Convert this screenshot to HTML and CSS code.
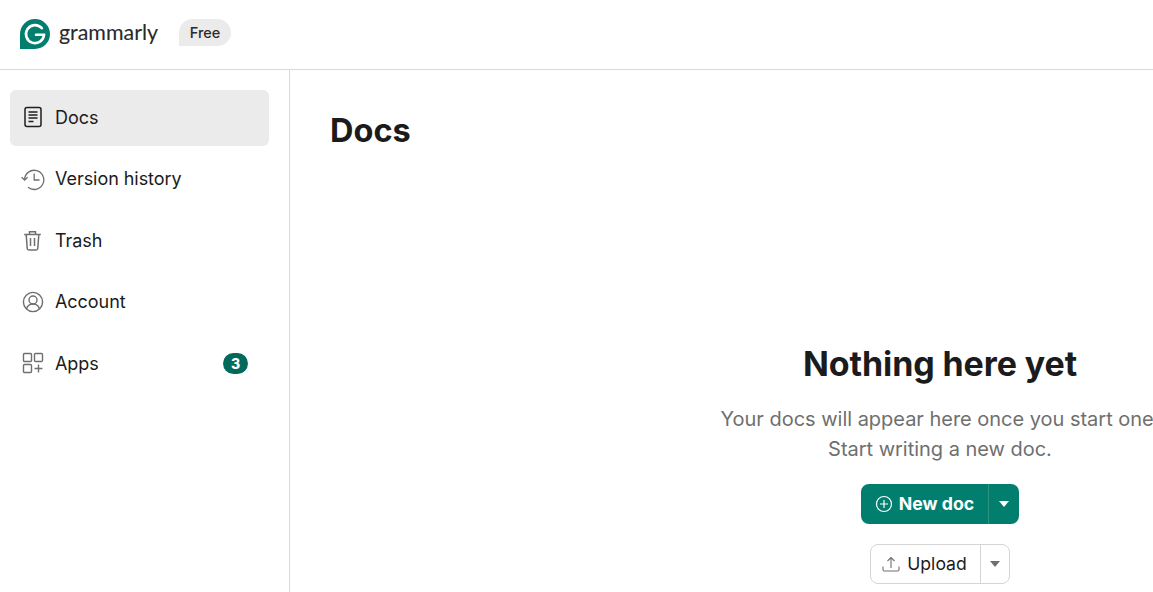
FILE: index.html
```html
<!DOCTYPE html>
<html lang="en">
<head>
<meta charset="utf-8">
<title>Grammarly Docs</title>
<link rel="stylesheet" href="styles.css">
</head>
<body>
<div class="app">
  <header class="topbar">
    <svg class="logo" width="30" height="30" viewBox="0 0 30 30" aria-hidden="true">
      <path d="M15 0a15 15 0 0 1 0 30H0V15A15 15 0 0 1 15 0z" fill="#027e6f"/>
      <path d="M21.800 9.200A9 9 0 1 0 24 15.800H16" fill="none" stroke="#fff" stroke-width="2.600" stroke-linecap="round"/>
    </svg>
    <span class="wordmark">grammarly</span>
    <span class="plan">Free</span>
  </header>
  <div class="body">
    <nav class="sidebar">
      <a class="nav-item active">
        <svg class="nav-icon" viewBox="0 0 24 24" aria-hidden="true"><rect x="4" y="2.500" width="16" height="19" rx="2" fill="none" stroke="#1f1f1f" stroke-width="1.500"/><path d="M7.500 7h9M7.500 10h9M7.500 13h9M7.500 16.500h5" stroke="#1f1f1f" stroke-width="1.500"/></svg>
        <span>Docs</span>
      </a>
      <a class="nav-item">
        <svg class="nav-icon" viewBox="0 0 24 24" aria-hidden="true"><path d="M3.600 12.500A9.600 9.600 0 1 1 7 20.200" fill="none" stroke="#6f6f6f" stroke-width="1.300"/><path d="M.6 10.200l3 2.800 3-2.800M13.200 6.500v6.500H18.500" fill="none" stroke="#6f6f6f" stroke-width="1.300"/></svg>
        <span>Version history</span>
      </a>
      <a class="nav-item">
        <svg class="nav-icon" viewBox="0 0 24 24" aria-hidden="true"><path d="M3.200 6.500h16.600M8.500 6.500V3.700h6v2.800M5.200 6.500l1 14a1.700 1.700 0 0 0 1.700 1.500h7.200a1.700 1.700 0 0 0 1.700-1.500l1-14M9.500 10v8M13.500 10v8" fill="none" stroke="#6f6f6f" stroke-width="1.500"/></svg>
        <span>Trash</span>
      </a>
      <a class="nav-item">
        <svg class="nav-icon" viewBox="0 0 24 24" aria-hidden="true"><circle cx="12" cy="12" r="9.600" fill="none" stroke="#6f6f6f" stroke-width="1.400"/><circle cx="12" cy="10" r="4" fill="none" stroke="#6f6f6f" stroke-width="1.400"/><path d="M5.500 19c1-3.500 3.500-5 6.500-5s5.500 1.500 6.500 5" fill="none" stroke="#6f6f6f" stroke-width="1.400"/></svg>
        <span>Account</span>
      </a>
      <a class="nav-item">
        <svg class="nav-icon" viewBox="0 0 24 24" aria-hidden="true"><g fill="none" stroke="#6f6f6f" stroke-width="1.400"><rect x="2.500" y="2.500" width="8" height="8" rx="1"/><rect x="13.500" y="2.500" width="8" height="8" rx="1"/><rect x="2.500" y="13.500" width="8" height="8" rx="1"/><path d="M17.500 13.500v8M13.500 17.500h8"/></g></svg>
        <span>Apps</span>
        <span class="count">3</span>
      </a>
    </nav>
    <main class="main">
      <h1 class="title">Docs</h1>
      <section class="empty">
        <h2 class="empty-title">Nothing here yet</h2>
        <p class="empty-text">Your docs will appear here once you start one.<br>Start writing a new doc.</p>
        <div class="split primary">
          <button class="split-main" type="button">
            <svg width="18" height="18" viewBox="0 0 18 18" aria-hidden="true"><circle cx="9" cy="9" r="7.500" fill="none" stroke="#fff" stroke-width="1.200"/><path d="M9 5v8M5 9h8" stroke="#fff" stroke-width="1.200"/></svg>
            <span>New doc</span>
          </button>
          <button class="split-caret" type="button" aria-label="More"><i class="caret"></i></button>
        </div>
        <div class="split secondary">
          <button class="split-main" type="button">
            <svg width="18" height="18" viewBox="0 0 18 18" aria-hidden="true"><path d="M9 13V2.500M5.500 6L9 2.500 12.500 6M1 11.500V14.500a1.500 1.500 0 0 0 1.500 1.500h13a1.500 1.500 0 0 0 1.500-1.500V11.500" fill="none" stroke="#6f6f6f" stroke-width="1.100"/></svg>
            <span>Upload</span>
          </button>
          <button class="split-caret" type="button" aria-label="More"><i class="caret"></i></button>
        </div>
      </section>
    </main>
  </div>
</div>
</body>
</html>
```

FILE: styles.css
```css
* { box-sizing: border-box; }
html, body { margin: 0; height: 100%; overflow: hidden; background: #fff; }
body { font-family: Inter, "Liberation Sans", sans-serif; color: #1b1b1b; }
.app { height: 592px; display: flex; flex-direction: column; }
.topbar { height: 70px; flex: none; display: flex; align-items: center; padding: 0 0 5px 20px; border-bottom: 1px solid #d9d9d9; }
.logo { flex: none; margin-top: 3px; }
.wordmark { font-family: Lato, sans-serif; font-size: 21.400px; color: #2a2a2a; margin-left: 9px; -webkit-text-stroke: .1px #2a2a2a; }
.plan { margin-left: 21px; width: 52px; height: 27px; display: flex; align-items: center; justify-content: center; background: #ebebeb; border-radius: 14px 14px 14px 0; font-size: 14.500px; font-weight: 500; color: #2a2a2a; }
.body { display: flex; flex: 1; min-height: 0; }
.sidebar { width: 290px; flex: none; border-right: 1px solid #d9d9d9; padding: 20px 20px 0 10px; display: flex; flex-direction: column; gap: 5.500px; }
.nav-item { height: 56px; display: flex; align-items: center; padding: 0 21px 2px 11px; border-radius: 6px; font-size: 18px; letter-spacing: -.05px; color: #1b1b1b; }
.nav-item.active { background: #ebebeb; }
.nav-icon { width: 24px; height: 24px; flex: none; margin-right: 10px; }
.count { margin-left: auto; width: 25px; height: 21px; border-radius: 11px; background: #04695d; color: #fff; font-size: 14px; font-weight: 800; letter-spacing: 0; display: flex; align-items: center; justify-content: center; }
.main { width: 1300px; flex: none; padding: 40px 0 0 40px; }
.title { margin: 0; font-size: 32.500px; line-height: 42px; font-weight: 700; color: #1b1b1b; }
.empty { display: flex; flex-direction: column; align-items: center; width: 1220px; margin-top: 190px; }
.empty-title { margin: 0; font-size: 34px; line-height: 44px; font-weight: 700; letter-spacing: -.1px; color: #1b1b1b; }
.empty-text { margin: 18px 0 0; font-size: 20px; line-height: 30px; letter-spacing: -.02px; text-align: center; color: #6f6f6f; white-space: nowrap; }
.split { display: flex; border-radius: 8px; }
.split button { font: inherit; background: none; border: 0; padding: 0 0 1px; display: flex; align-items: center; justify-content: center; }
.primary { margin-top: 20px; width: 158px; height: 40px; background: #027e6f; color: #fff; font-size: 17.700px; font-weight: 700; }
.primary .split-main { width: 127px; gap: 6px; color: #fff; font-weight: 700; }
.primary .split-caret { flex: 1; border-left: 1px solid #2d927f; padding-right: 1px; }
.primary .caret { border-top-color: #fff; border-left-width: 5px; border-right-width: 5px; }
.secondary { margin-top: 20px; width: 140px; height: 40px; border: 1px solid #d4d4d4; color: #1b1b1b; font-size: 17.600px; }
.secondary .split-main { width: 109px; gap: 7px; padding-right: 2px; color: #1b1b1b; }
.secondary .split-caret { flex: 1; border-left: 1px solid #d4d4d4; padding-right: 1px; }
.caret { width: 0; height: 0; border-left: 5px solid transparent; border-right: 5px solid transparent; border-top: 6px solid #6f6f6f; }
```
